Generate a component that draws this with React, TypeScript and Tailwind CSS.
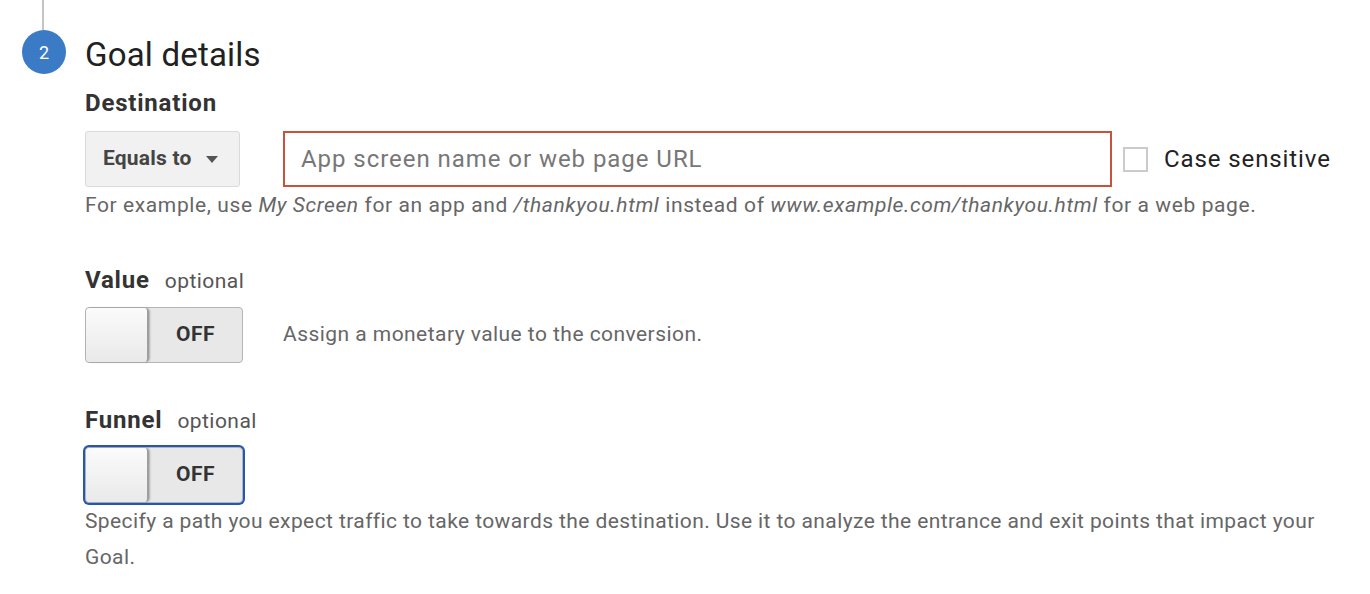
import React from "react";

function Toggle({ focused }: { focused?: boolean }) {
  return (
    <div
      className={
        "flex h-[56px] w-[158px] rounded-[4px] border border-[#b5b5b5] bg-[#e8e8e8] " +
        (focused ? "shadow-[0_0_0_2px_#2456b3]" : "")
      }
    >
      <div className="h-full w-[63px] rounded-[4px] border-r-2 border-r-[#9e9e9e] bg-gradient-to-b from-[#fbfbfb] to-[#e9e9e9] shadow-[1px_0_2px_rgba(0,0,0,0.25)]" />
      <div className="flex flex-1 items-center justify-center text-[21px] font-bold tracking-[0.5px] text-[#333]">
        OFF
      </div>
    </div>
  );
}

export default function App() {
  return (
    <div
      className="w-[1370px] h-[594px] bg-white overflow-hidden"
      style={{ fontFamily: "Roboto, 'Liberation Sans', sans-serif" }}
    >
      <div className="ml-[42px] h-[30px] w-[2px] bg-[#c4c4c4]" />
      <div className="flex h-[44px] items-center">
        <div className="ml-[22px] flex h-[44px] w-[44px] items-center justify-center rounded-full bg-[#3b7bc6] text-[18px] text-white">
          2
        </div>
        <div className="ml-[19px] mt-[6px] text-[33px] leading-[44px] tracking-[0.2px] text-[#212121]">
          Goal details
        </div>
      </div>
      <div className="pl-[85px] w-[1340px]">
        <div className="mt-[16px] text-[24px] font-bold leading-[26px] tracking-[0.8px] text-[#333]">
          Destination
        </div>
        <div className="mt-[15px] flex items-center">
          <div className="flex h-[56px] w-[155px] items-center rounded-[3px] border border-[#dadada] bg-[#f1f1f1] pl-[17px] text-[21px] font-bold tracking-[0.2px] text-[#444]">
            Equals to
            <svg className="ml-[14px]" width="12" height="7" viewBox="0 0 12 7">
              <path d="M0 0 L12 0 L6 7 Z" fill="#555" />
            </svg>
          </div>
          <div className="ml-[43px] flex h-[56px] w-[829px] items-center border-2 border-[#c9523d] pl-[16px] text-[24px] tracking-[0.95px] text-[#777]">
            App screen name or web page URL
          </div>
          <div className="ml-[11px] h-[25px] w-[25px] border-2 border-[#cbcbcb]" />
          <div className="ml-[16px] text-[24px] tracking-[0.9px] text-[#222]">Case sensitive</div>
        </div>
        <div className="text-[21px] leading-[36px] tracking-[0.6px] text-[#666]">
          For example, use <i>My Screen</i> for an app and <i>/thankyou.html</i> instead of{" "}
          <i>www.example.com/thankyou.html</i> for a web page.
        </div>
        <div className="mt-[43px] flex items-baseline leading-[28px]">
          <span className="text-[24px] font-bold tracking-[0.8px] text-[#333]">Value</span>
          <span className="ml-[15px] text-[21px] tracking-[0.45px] text-[#555]">optional</span>
        </div>
        <div className="mt-[12px] flex items-center">
          <Toggle />
          <div className="ml-[40px] text-[21px] tracking-[0.45px] text-[#666]">
            Assign a monetary value to the conversion.
          </div>
        </div>
        <div className="mt-[43px] flex items-baseline leading-[28px]">
          <span className="text-[24px] font-bold tracking-[0.8px] text-[#333]">Funnel</span>
          <span className="ml-[15px] text-[21px] tracking-[0.45px] text-[#555]">optional</span>
        </div>
        <div className="mt-[12px]">
          <Toggle focused />
        </div>
        <div className="text-[21px] leading-[36px] tracking-[0.4px] text-[#666]">
          Specify a path you expect traffic to take towards the destination. Use it to analyze the
          entrance and exit points that impact your Goal.
        </div>
      </div>
    </div>
  );
}
